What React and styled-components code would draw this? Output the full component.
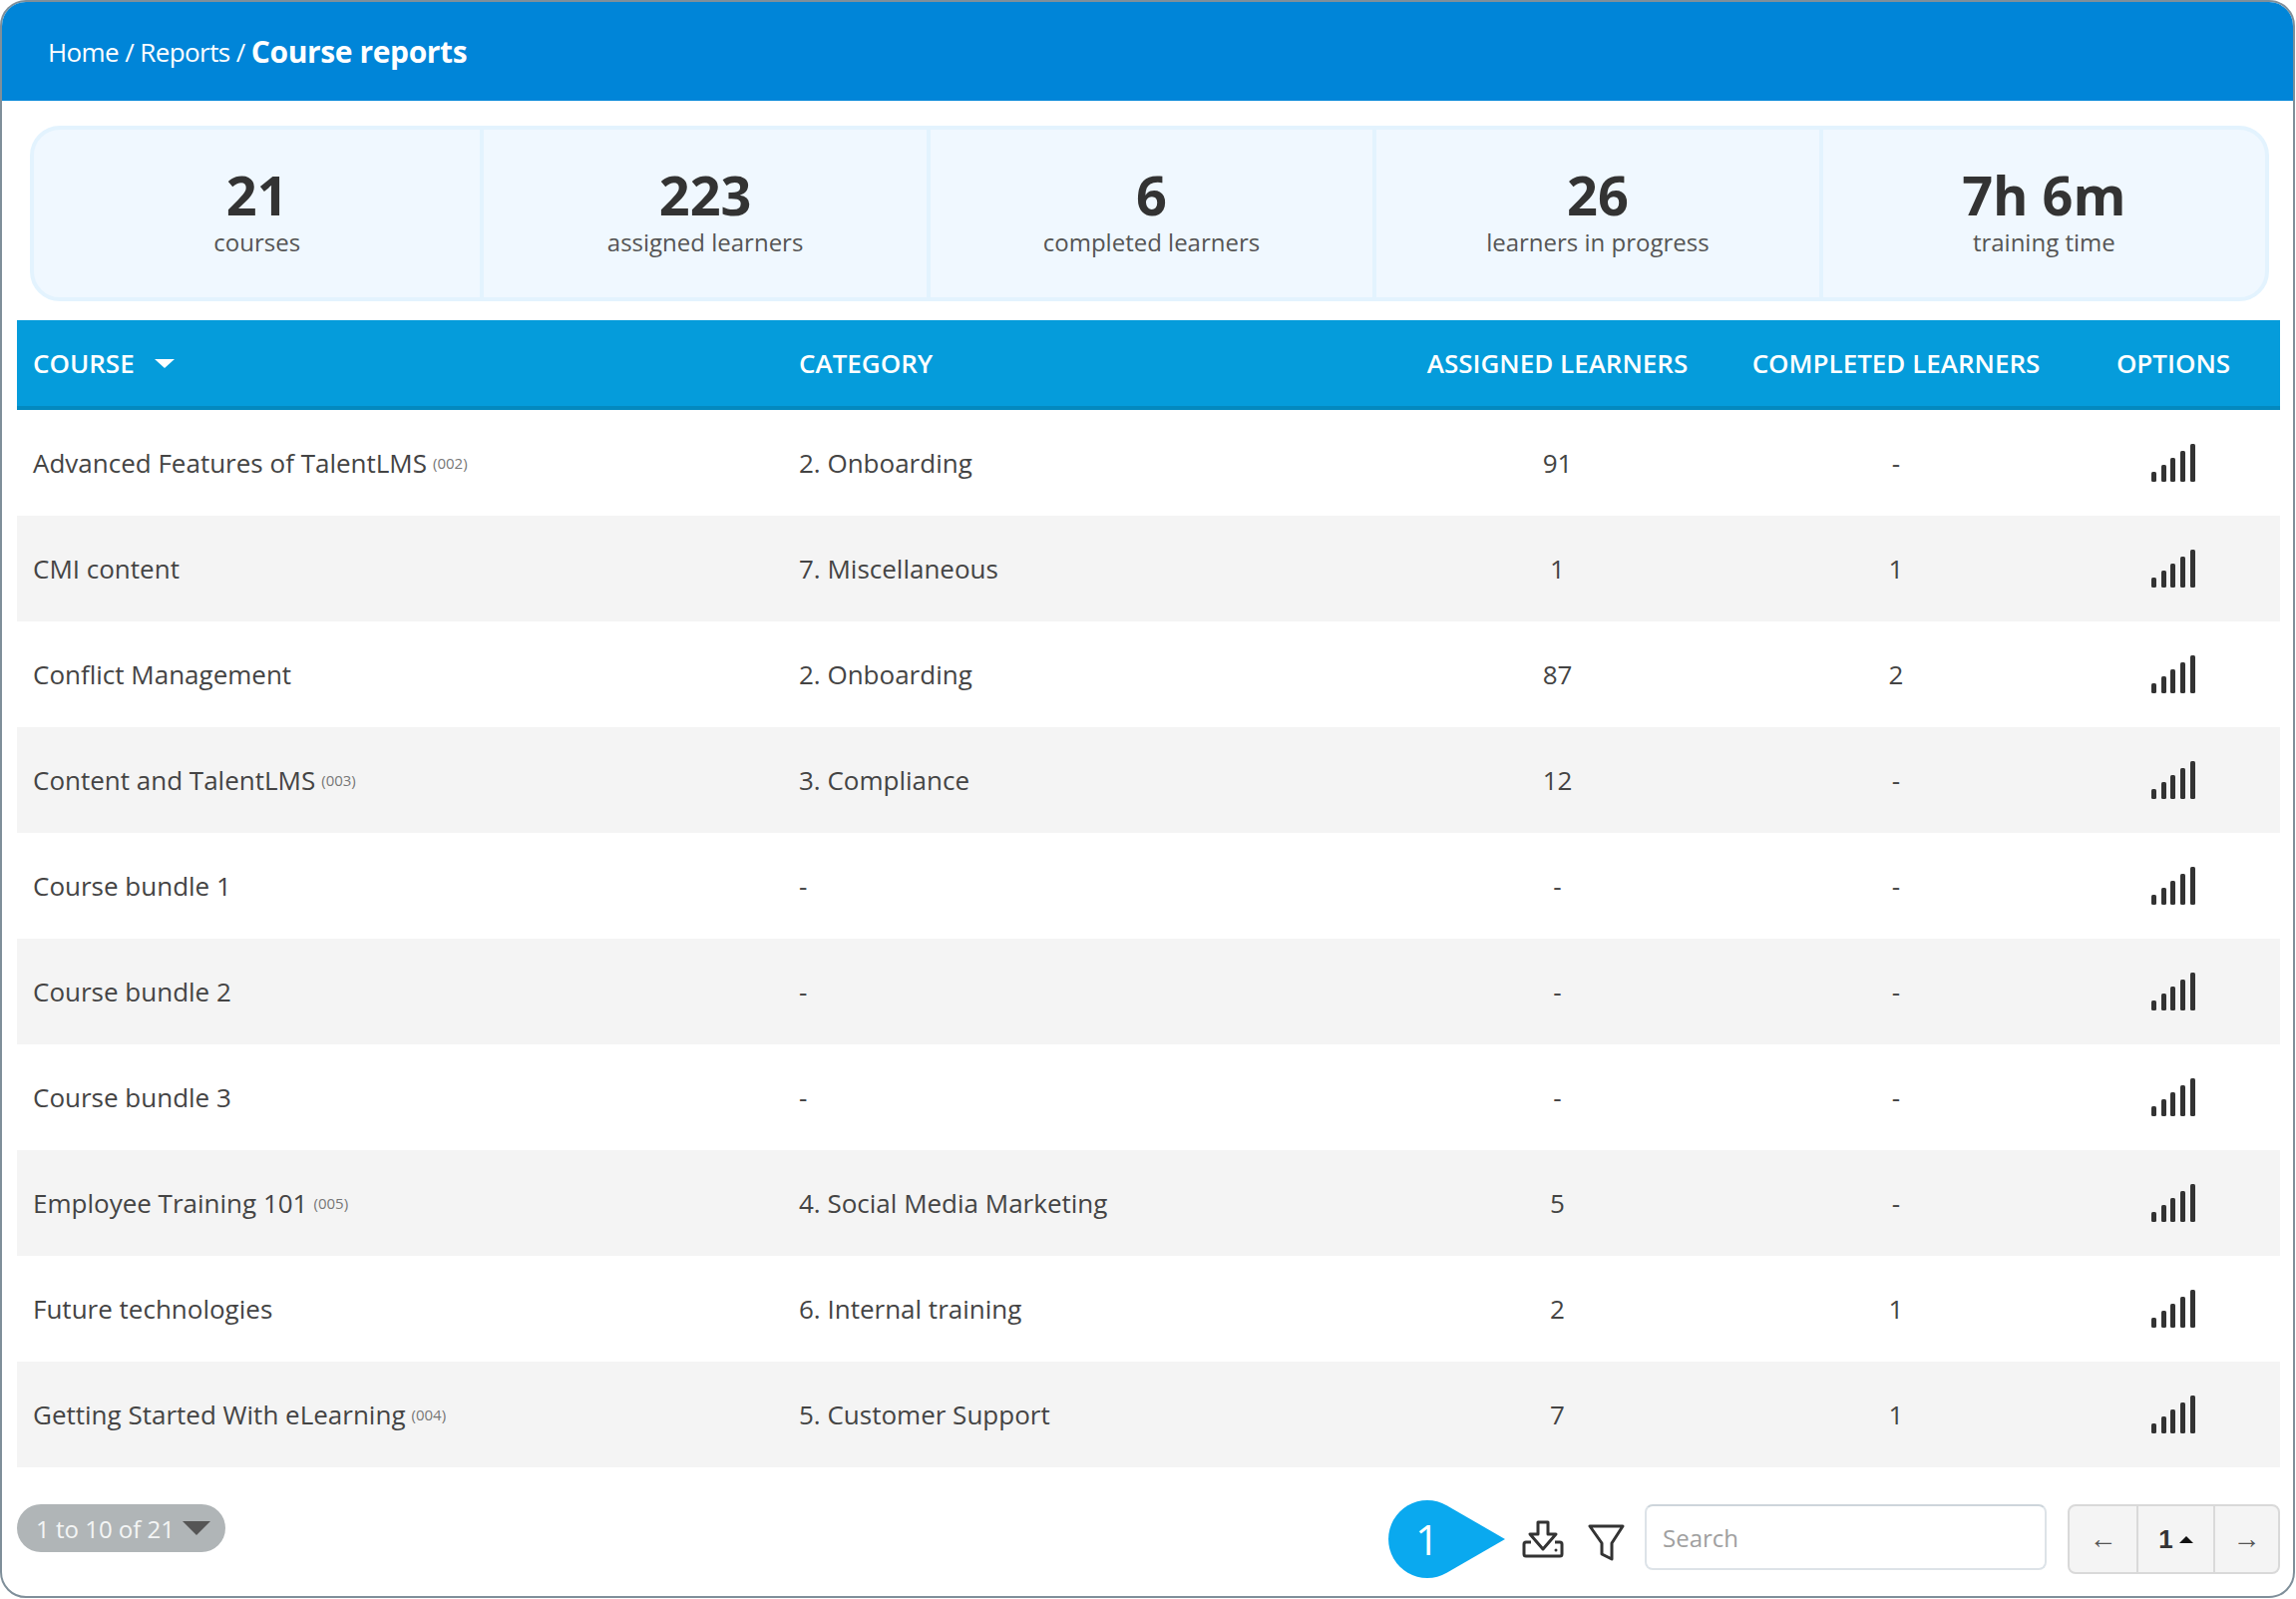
import React from "react";
import styled, { createGlobalStyle } from "styled-components";

const stats = [
  { value: "21", label: "courses" },
  { value: "223", label: "assigned learners" },
  { value: "6", label: "completed learners" },
  { value: "26", label: "learners in progress" },
  { value: "7h 6m", label: "training time" },
];

const rows = [
  { name: "Advanced Features of TalentLMS", code: "(002)", category: "2. Onboarding", assigned: "91", completed: "-" },
  { name: "CMI content", category: "7. Miscellaneous", assigned: "1", completed: "1" },
  { name: "Conflict Management", category: "2. Onboarding", assigned: "87", completed: "2" },
  { name: "Content and TalentLMS", code: "(003)", category: "3. Compliance", assigned: "12", completed: "-" },
  { name: "Course bundle 1", category: "-", assigned: "-", completed: "-" },
  { name: "Course bundle 2", category: "-", assigned: "-", completed: "-" },
  { name: "Course bundle 3", category: "-", assigned: "-", completed: "-" },
  { name: "Employee Training 101", code: "(005)", category: "4. Social Media Marketing", assigned: "5", completed: "-" },
  { name: "Future technologies", category: "6. Internal training", assigned: "2", completed: "1" },
  { name: "Getting Started With eLearning", code: "(004)", category: "5. Customer Support", assigned: "7", completed: "1" },
];

const SignalIcon = () => (
  <svg width="44" height="38" viewBox="0 0 44 38" fill="#333">
    <rect x="0" y="28" width="5" height="10" rx="1.5" />
    <rect x="10" y="21" width="5" height="17" rx="1.5" />
    <rect x="19" y="14" width="5" height="24" rx="1.5" />
    <rect x="29" y="7" width="5" height="31" rx="1.5" />
    <rect x="39" y="0" width="5" height="38" rx="1.5" />
  </svg>
);

const DownloadIcon = () => (
  <svg width="42" height="38" viewBox="0 0 42 38" fill="none" stroke="#333" strokeWidth="3" strokeLinejoin="round">
    <path d="M16 2H26V14H34L21 29L8 14H16Z" />
    <path d="M9 22H4a2 2 0 0 0-2 2v10a2 2 0 0 0 2 2h34a2 2 0 0 0 2-2V24a2 2 0 0 0-2-2h-5" />
    <circle cx="34" cy="30" r="1.5" fill="#333" stroke="none" />
  </svg>
);

const FilterIcon = () => (
  <svg width="37" height="37" viewBox="0 0 37 37" fill="none" stroke="#333" strokeWidth="3" strokeLinejoin="round">
    <path d="M2 2H35L24 19V35L14 30V19Z" />
  </svg>
);

export default function App() {
  return (
    <Frame>
      <GlobalStyle />
      <Header>
        <Crumb>Home / Reports / </Crumb>
        <CrumbCurrent>Course reports</CrumbCurrent>
      </Header>

      <Stats>
        {stats.map((s) => (
          <Stat key={s.label}>
            <StatValue>{s.value}</StatValue>
            <StatLabel>{s.label}</StatLabel>
          </Stat>
        ))}
      </Stats>

      <Table>
        <HeadRow>
          <HeadCell>
            COURSE <SortCaret />
          </HeadCell>
          <HeadCell>CATEGORY</HeadCell>
          <HeadCell $center>ASSIGNED LEARNERS</HeadCell>
          <HeadCell $center>COMPLETED LEARNERS</HeadCell>
          <HeadCell $center>OPTIONS</HeadCell>
        </HeadRow>
        {rows.map((r) => (
          <Row key={r.name}>
            <Cell>
              {r.name}
              {r.code && <Code>{r.code}</Code>}
            </Cell>
            <Cell>{r.category}</Cell>
            <Cell $center>{r.assigned}</Cell>
            <Cell $center>{r.completed}</Cell>
            <Cell $center>
              <SignalIcon />
            </Cell>
          </Row>
        ))}
      </Table>

      <Footer>
        <CountPill>
          1 to 10 of 21 <PillCaret />
        </CountPill>
        <Actions>
          <Callout>
            <svg width="117" height="78" viewBox="0 0 117 78">
              <path d="M58.5 5.2L117 39L58.5 72.8A39 39 0 1 1 58.5 5.2Z" fill="#0aa9ef" />
            </svg>
            <CalloutNumber>1</CalloutNumber>
          </Callout>
          <DownloadButton>
            <DownloadIcon />
          </DownloadButton>
          <FilterButton>
            <FilterIcon />
          </FilterButton>
          <SearchInput placeholder="Search" />
          <Pager>
            <PagerButton>←</PagerButton>
            <PagerCurrent>
              1<PagerCaret />
            </PagerCurrent>
            <PagerButton>→</PagerButton>
          </Pager>
        </Actions>
      </Footer>
    </Frame>
  );
}

const GlobalStyle = createGlobalStyle`
  html, body {
    margin: 0;
    padding: 0;
    background: #fff;
  }
  * {
    box-sizing: border-box;
  }
`;

const Frame = styled.div`
  width: 2301px;
  height: 1602px;
  border: 2px solid #7f8f9a;
  border-radius: 26px;
  overflow: hidden;
  background: #fff;
  font-family: "Open Sans", sans-serif;
  color: #444;
`;

const Header = styled.div`
  height: 99px;
  padding-left: 46px;
  display: flex;
  align-items: center;
  white-space: pre;
  background: #0085d8;
  color: #fff;
`;

const Crumb = styled.span`
  font-size: 26px;
  letter-spacing: -0.6px;
`;

const CrumbCurrent = styled.span`
  font-size: 30px;
  font-weight: 700;
  letter-spacing: -0.4px;
`;

const Stats = styled.div`
  margin: 25px 24px 0 28px;
  height: 176px;
  display: grid;
  grid-template-columns: repeat(5, 1fr);
  background: #f0f8ff;
  border: 4px solid #e3f3fe;
  border-radius: 30px;
`;

const Stat = styled.div`
  display: flex;
  flex-direction: column;
  align-items: center;
  padding-top: 32px;
  & + & {
    border-left: 4px solid #e3f3fe;
  }
`;

const StatValue = styled.div`
  font-size: 54px;
  line-height: 66px;
  font-weight: 700;
  color: #333;
`;

const StatLabel = styled.div`
  font-size: 24px;
  line-height: 30px;
  color: #555;
`;

const Table = styled.div`
  margin: 19px 13px 0 15px;
`;

const columns = "768px 621px 311px 368px 202px";

const HeadRow = styled.div`
  height: 90px;
  display: grid;
  grid-template-columns: ${columns};
  align-items: center;
  background: #059cdb;
  border-bottom: 4px solid #0489bf;
`;

const HeadCell = styled.div`
  display: flex;
  align-items: center;
  justify-content: ${(p) => (p.$center ? "center" : "flex-start")};
  padding: ${(p) => (p.$center ? "0" : "0 16px")};
  white-space: pre;
  font-size: 26px;
  font-weight: 600;
  color: #fff;
  &:last-child {
    padding-right: 14px;
  }
`;

const SortCaret = styled.span`
  margin-left: 14px;
  border-left: 10px solid transparent;
  border-right: 10px solid transparent;
  border-top: 9px solid #fff;
`;

const Row = styled.div`
  height: 106px;
  display: grid;
  grid-template-columns: ${columns};
  align-items: center;
  &:nth-child(odd) {
    background: #f4f4f4;
  }
`;

const Cell = styled.div`
  display: flex;
  align-items: center;
  justify-content: ${(p) => (p.$center ? "center" : "flex-start")};
  padding: ${(p) => (p.$center ? "0" : "0 16px")};
  white-space: pre;
  font-size: 26px;
  color: #444;
  &:last-child {
    padding-right: 14px;
  }
`;

const Code = styled.span`
  margin-left: 6px;
  font-size: 15px;
  color: #777;
`;

const Footer = styled.div`
  display: flex;
  justify-content: space-between;
  align-items: flex-start;
  padding: 33px 13px 0 15px;
`;

const CountPill = styled.div`
  margin-top: 4px;
  width: 209px;
  height: 48px;
  padding-left: 19px;
  display: flex;
  align-items: center;
  white-space: pre;
  border-radius: 24px;
  background: #b0b5b7;
  color: #f4f5f5;
  font-size: 24px;
`;

const PillCaret = styled.span`
  margin-left: 2px;
  border-left: 14px solid transparent;
  border-right: 14px solid transparent;
  border-top: 14px solid #555;
`;

const Actions = styled.div`
  display: flex;
  align-items: center;
`;

const Callout = styled.div`
  position: relative;
  width: 117px;
  height: 78px;
  svg {
    display: block;
  }
`;

const CalloutNumber = styled.span`
  position: absolute;
  left: 0;
  top: 0;
  width: 78px;
  text-align: center;
  font-size: 42px;
  line-height: 78px;
  color: #fff;
`;

const DownloadButton = styled.div`
  margin-left: 17px;
  display: flex;
`;

const FilterButton = styled.div`
  margin-left: 24px;
  margin-top: 6px;
  display: flex;
`;

const SearchInput = styled.input`
  margin-left: 20px;
  margin-bottom: 4px;
  width: 403px;
  height: 66px;
  padding: 0 16px;
  border: 2px solid #dde3e8;
  border-top-color: #cdd5db;
  border-radius: 8px;
  outline: none;
  font-family: "Open Sans", sans-serif;
  font-size: 24px;
  color: #444;
  &::placeholder {
    color: #a0a0a0;
  }
`;

const Pager = styled.div`
  margin-left: 21px;
  width: 213px;
  height: 70px;
  display: grid;
  grid-template-columns: 67px 79px 1fr;
  background: #f4f4f4;
  border: 2px solid #d9d9d9;
  border-radius: 8px;
  font-family: "Liberation Sans", sans-serif;
`;

const PagerButton = styled.div`
  display: flex;
  align-items: center;
  justify-content: center;
  font-size: 28px;
  color: #555;
`;

const PagerCurrent = styled.div`
  display: flex;
  align-items: center;
  justify-content: center;
  gap: 6px;
  border-left: 2px solid #d9d9d9;
  border-right: 2px solid #d9d9d9;
  font-size: 26px;
  font-weight: 700;
  color: #333;
`;

const PagerCaret = styled.span`
  border-left: 7px solid transparent;
  border-right: 7px solid transparent;
  border-bottom: 7px solid #111;
`;
